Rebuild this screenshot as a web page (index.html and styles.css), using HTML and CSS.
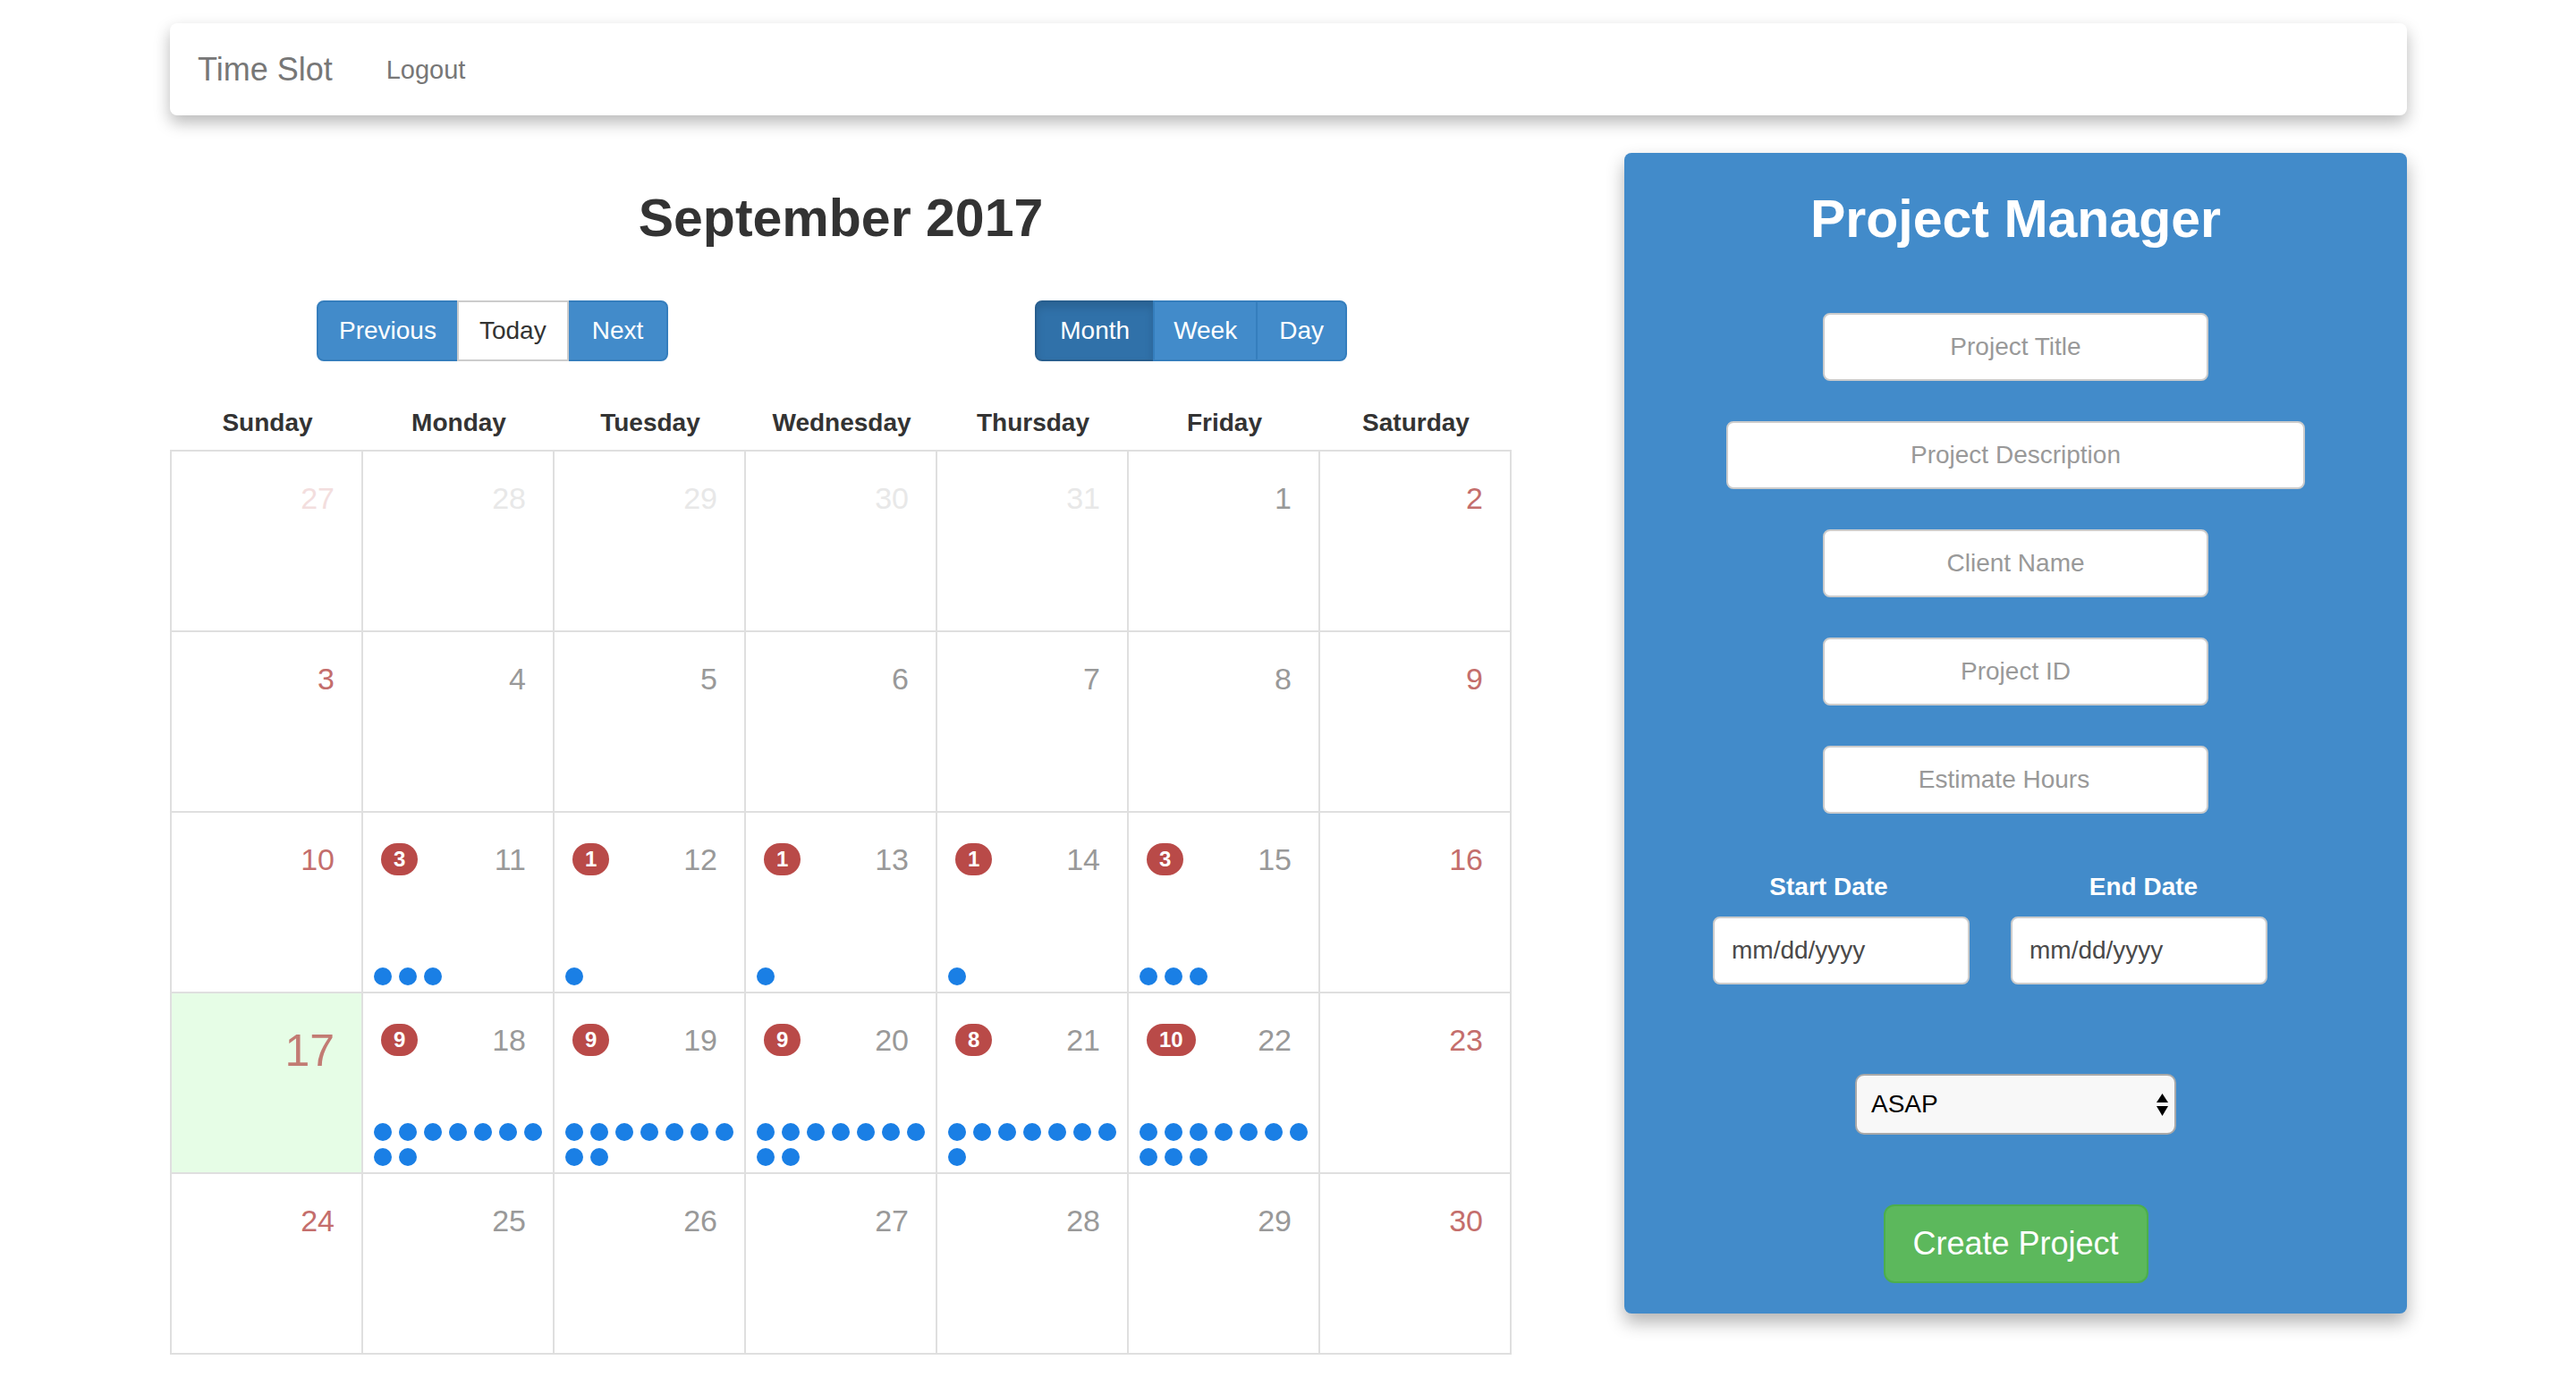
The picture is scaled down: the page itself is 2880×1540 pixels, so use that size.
FILE: index.html
```html
<!DOCTYPE html>
<html lang="en">
<head>
<meta charset="utf-8">
<title>Time Slot</title>
<link rel="stylesheet" href="styles.css">
</head>
<body>
<nav class="navbar">
  <a class="brand" href="#">Time Slot</a>
  <a class="nav-link" href="#">Logout</a>
</nav>
<main class="main">
  <section class="calendar">
    <h2 class="cal-title">September 2017</h2>
    <div class="toolbar">
      <div class="btn-group">
        <button class="btn btn-primary">Previous</button>
        <button class="btn btn-default">Today</button>
        <button class="btn btn-primary btn-next">Next</button>
      </div>
      <div class="btn-group view-group">
        <button class="btn btn-primary active">Month</button>
        <button class="btn btn-primary btn-week">Week</button>
        <button class="btn btn-primary">Day</button>
      </div>
    </div>
    <div class="weekdays">
      <div>Sunday</div><div>Monday</div><div>Tuesday</div><div>Wednesday</div><div>Thursday</div><div>Friday</div><div>Saturday</div>
    </div>
    <div class="grid">
      <div class="cell"><div class="head"><span class="num out wkd">27</span></div></div>
      <div class="cell"><div class="head"><span class="num out">28</span></div></div>
      <div class="cell"><div class="head"><span class="num out">29</span></div></div>
      <div class="cell"><div class="head"><span class="num out">30</span></div></div>
      <div class="cell"><div class="head"><span class="num out">31</span></div></div>
      <div class="cell"><div class="head"><span class="num">1</span></div></div>
      <div class="cell"><div class="head"><span class="num wkd">2</span></div></div>

      <div class="cell"><div class="head"><span class="num wkd">3</span></div></div>
      <div class="cell"><div class="head"><span class="num">4</span></div></div>
      <div class="cell"><div class="head"><span class="num">5</span></div></div>
      <div class="cell"><div class="head"><span class="num">6</span></div></div>
      <div class="cell"><div class="head"><span class="num">7</span></div></div>
      <div class="cell"><div class="head"><span class="num">8</span></div></div>
      <div class="cell"><div class="head"><span class="num wkd">9</span></div></div>

      <div class="cell"><div class="head"><span class="num wkd">10</span></div></div>
      <div class="cell"><div class="head"><span class="badge">3</span><span class="num">11</span></div>
        <div class="dots"><i class="dot"></i><i class="dot"></i><i class="dot"></i></div></div>
      <div class="cell"><div class="head"><span class="badge">1</span><span class="num">12</span></div>
        <div class="dots"><i class="dot"></i></div></div>
      <div class="cell"><div class="head"><span class="badge">1</span><span class="num">13</span></div>
        <div class="dots"><i class="dot"></i></div></div>
      <div class="cell"><div class="head"><span class="badge">1</span><span class="num">14</span></div>
        <div class="dots"><i class="dot"></i></div></div>
      <div class="cell"><div class="head"><span class="badge">3</span><span class="num">15</span></div>
        <div class="dots"><i class="dot"></i><i class="dot"></i><i class="dot"></i></div></div>
      <div class="cell"><div class="head"><span class="num wkd">16</span></div></div>

      <div class="cell today"><div class="head"><span class="num wkd big">17</span></div></div>
      <div class="cell"><div class="head"><span class="badge">9</span><span class="num">18</span></div>
        <div class="dots"><i class="dot"></i><i class="dot"></i><i class="dot"></i><i class="dot"></i><i class="dot"></i><i class="dot"></i><i class="dot"></i><i class="dot"></i><i class="dot"></i></div></div>
      <div class="cell"><div class="head"><span class="badge">9</span><span class="num">19</span></div>
        <div class="dots"><i class="dot"></i><i class="dot"></i><i class="dot"></i><i class="dot"></i><i class="dot"></i><i class="dot"></i><i class="dot"></i><i class="dot"></i><i class="dot"></i></div></div>
      <div class="cell"><div class="head"><span class="badge">9</span><span class="num">20</span></div>
        <div class="dots"><i class="dot"></i><i class="dot"></i><i class="dot"></i><i class="dot"></i><i class="dot"></i><i class="dot"></i><i class="dot"></i><i class="dot"></i><i class="dot"></i></div></div>
      <div class="cell"><div class="head"><span class="badge">8</span><span class="num">21</span></div>
        <div class="dots"><i class="dot"></i><i class="dot"></i><i class="dot"></i><i class="dot"></i><i class="dot"></i><i class="dot"></i><i class="dot"></i><i class="dot"></i></div></div>
      <div class="cell"><div class="head"><span class="badge">10</span><span class="num">22</span></div>
        <div class="dots"><i class="dot"></i><i class="dot"></i><i class="dot"></i><i class="dot"></i><i class="dot"></i><i class="dot"></i><i class="dot"></i><i class="dot"></i><i class="dot"></i><i class="dot"></i></div></div>
      <div class="cell"><div class="head"><span class="num wkd">23</span></div></div>

      <div class="cell"><div class="head"><span class="num wkd">24</span></div></div>
      <div class="cell"><div class="head"><span class="num">25</span></div></div>
      <div class="cell"><div class="head"><span class="num">26</span></div></div>
      <div class="cell"><div class="head"><span class="num">27</span></div></div>
      <div class="cell"><div class="head"><span class="num">28</span></div></div>
      <div class="cell"><div class="head"><span class="num">29</span></div></div>
      <div class="cell"><div class="head"><span class="num wkd">30</span></div></div>
    </div>
  </section>

  <aside class="panel">
    <h2 class="panel-title">Project Manager</h2>
    <input class="field first" type="text" placeholder="Project Title">
    <input class="field wide" type="text" placeholder="Project Description">
    <input class="field" type="text" placeholder="Client Name">
    <input class="field" type="text" placeholder="Project ID">
    <input class="field hours" type="text" placeholder="Estimate Hours">
    <div class="dates">
      <div class="date-col">
        <label class="date-label start">Start Date</label>
        <input class="date-input" type="text" placeholder="mm/dd/yyyy">
      </div>
      <div class="date-col">
        <label class="date-label end">End Date</label>
        <input class="date-input" type="text" placeholder="mm/dd/yyyy">
      </div>
    </div>
    <div class="select">
      <span>ASAP</span>
      <svg class="arrows" width="13" height="25" viewBox="0 0 13 25"><polygon points="6.5,0 13,10 0,10" fill="#000"/><polygon points="0,14 13,14 6.5,25" fill="#000"/></svg>
    </div>
    <button class="btn-create">Create Project</button>
  </aside>
</main>
</body>
</html>
```
FILE: styles.css
```css
html, body {
  margin: 0;
  background: #fff;
}
body {
  font-family: "Liberation Sans", Arial, Helvetica, sans-serif;
  color: #333;
}

/* Navbar */
.navbar {
  box-sizing: border-box;
  margin: 26px 0 0 190px;
  width: 2501px;
  height: 103px;
  display: flex;
  align-items: center;
  padding-left: 31px;
  background: #fff;
  border-radius: 8px;
  box-shadow: 0 8px 18px rgba(0, 0, 0, 0.28);
}
.brand {
  font-size: 36px;
  color: #777;
  text-decoration: none;
}
.nav-link {
  font-size: 29px;
  color: #777;
  text-decoration: none;
  margin-left: 60px;
  margin-top: 2px;
}

/* Layout */
.main {
  display: flex;
  justify-content: space-between;
  align-items: flex-start;
  margin: 42px 0 0 190px;
  width: 2501px;
}
.calendar {
  width: 1500px;
  padding-top: 40px;
}
.cal-title {
  margin: 0;
  font-size: 59px;
  line-height: 66px;
  font-weight: bold;
  text-align: center;
  color: #333;
}

/* Toolbar buttons */
.toolbar {
  display: flex;
  justify-content: space-between;
  margin-top: 59px;
  padding: 0 184px 0 164px;
}
.btn-group {
  display: flex;
}
.btn {
  box-sizing: border-box;
  font-family: "Liberation Sans", Arial, Helvetica, sans-serif;
  font-size: 28px;
  height: 68px;
  line-height: 64px;
  padding: 0 23px;
  border: 2px solid;
  border-radius: 0;
  margin: 0;
  cursor: pointer;
}
.btn + .btn {
  margin-left: -2px;
}
.btn:first-child {
  border-radius: 8px 0 0 8px;
}
.btn:last-child {
  border-radius: 0 8px 8px 0;
}
.btn-primary {
  background: #428bca;
  border-color: #357ebd;
  color: #fff;
}
.btn-next {
  padding: 0 26px;
}
.btn-default {
  background: #fff;
  border-color: #ccc;
  color: #333;
  position: relative;
}
.btn-primary.active {
  background: #3071a9;
  border-color: #285e8e;
  box-shadow: inset 0 6px 10px rgba(0, 0, 0, 0.125);
}
.view-group .btn {
  padding: 0 24px;
}
.view-group .btn.active {
  padding: 0 26px;
}
.view-group .btn.btn-week {
  padding: 0 21px;
}

/* Calendar grid */
.weekdays {
  display: grid;
  grid-template-columns: repeat(7, 1fr);
  padding-left: 2px;
  margin-top: 39px;
  height: 60px;
  align-items: center;
  text-align: center;
  font-size: 28px;
  font-weight: bold;
  color: #333;
}
.grid {
  display: grid;
  grid-template-columns: repeat(7, 1fr);
  border-top: 2px solid #dfdfdf;
  border-left: 2px solid #dfdfdf;
}
.cell {
  box-sizing: border-box;
  height: 202px;
  border-right: 2px solid #dfdfdf;
  border-bottom: 2px solid #dfdfdf;
  display: flex;
  flex-direction: column;
  padding: 34px 0 7px 0;
}
.cell.today {
  background: #e6fde6;
}
.head {
  display: flex;
  align-items: center;
  justify-content: space-between;
  height: 36px;
  padding: 0 30px 0 20px;
}
.num {
  margin-left: auto;
  font-size: 34px;
  line-height: 36px;
  color: #999;
}
.num.wkd {
  color: #c46e6c;
}
.num.out {
  color: #e8e8e8;
}
.num.out.wkd {
  color: #f3dede;
}
.num.big {
  font-size: 50px;
  margin-top: 24px;
  margin-right: 0;
  color: #c27b73;
}
.badge {
  display: inline-block;
  background: #b94a48;
  color: #fff;
  font-size: 24px;
  font-weight: bold;
  line-height: 24px;
  padding: 6px 14px;
  border-radius: 20px;
}
.dots {
  margin-top: auto;
  display: flex;
  flex-wrap: wrap;
  gap: 8px;
  padding-left: 12px;
}
.dot {
  display: block;
  width: 20px;
  height: 20px;
  border-radius: 50%;
  background: #1a7fe5;
}

/* Project panel */
.panel {
  box-sizing: border-box;
  width: 875px;
  height: 1298px;
  background: #428bca;
  border-radius: 8px;
  box-shadow: 0 10px 20px rgba(0, 0, 0, 0.3);
  padding-top: 41px;
  display: flex;
  flex-direction: column;
  align-items: center;
}
.panel-title {
  margin: 0;
  font-size: 59px;
  line-height: 66px;
  font-weight: bold;
  color: #fff;
}
.field {
  box-sizing: border-box;
  width: 431px;
  height: 76px;
  margin: 45px 0 0 0;
  border: 2px solid #ccc;
  border-radius: 8px;
  background: #fff;
  font-family: "Liberation Sans", Arial, Helvetica, sans-serif;
  font-size: 28px;
  text-align: center;
  color: #555;
  padding: 0 12px;
  outline: none;
}
.field::placeholder {
  color: #999;
}
.field.first {
  margin-top: 72px;
}
.field.wide {
  width: 647px;
}
.field.hours {
  padding-right: 38px;
}
.dates {
  align-self: flex-start;
  margin: 62px 0 0 99px;
  display: flex;
  gap: 46px;
}
.date-col {
  display: flex;
  flex-direction: column;
}
.date-label {
  font-size: 28px;
  line-height: 40px;
  font-weight: bold;
  color: #fff;
  text-align: center;
}
.date-label.start {
  padding-right: 28px;
}
.date-label.end {
  padding-left: 10px;
}
.date-input {
  box-sizing: border-box;
  width: 287px;
  height: 76px;
  margin-top: 13px;
  border: 2px solid #ccc;
  border-radius: 8px;
  background: #fff;
  font-family: "Liberation Sans", Arial, Helvetica, sans-serif;
  font-size: 28px;
  padding: 0 0 0 19px;
  color: #444;
  outline: none;
}
.date-input::placeholder {
  color: #4a4a4a;
}
.select {
  box-sizing: border-box;
  width: 359px;
  height: 68px;
  margin-top: 100px;
  border: 2px solid #a9a9a9;
  border-radius: 10px;
  background: #f8f8f8;
  display: flex;
  align-items: center;
  justify-content: space-between;
  padding: 0 7px 0 16px;
  font-size: 28px;
  color: #000;
}
.arrows {
  display: block;
}
.btn-create {
  box-sizing: border-box;
  width: 296px;
  height: 88px;
  margin-top: 78px;
  background: #5cb85c;
  border: 2px solid #4cae4c;
  border-radius: 12px;
  color: #fff;
  font-family: "Liberation Sans", Arial, Helvetica, sans-serif;
  font-size: 36px;
  padding: 0;
  cursor: pointer;
}
```
